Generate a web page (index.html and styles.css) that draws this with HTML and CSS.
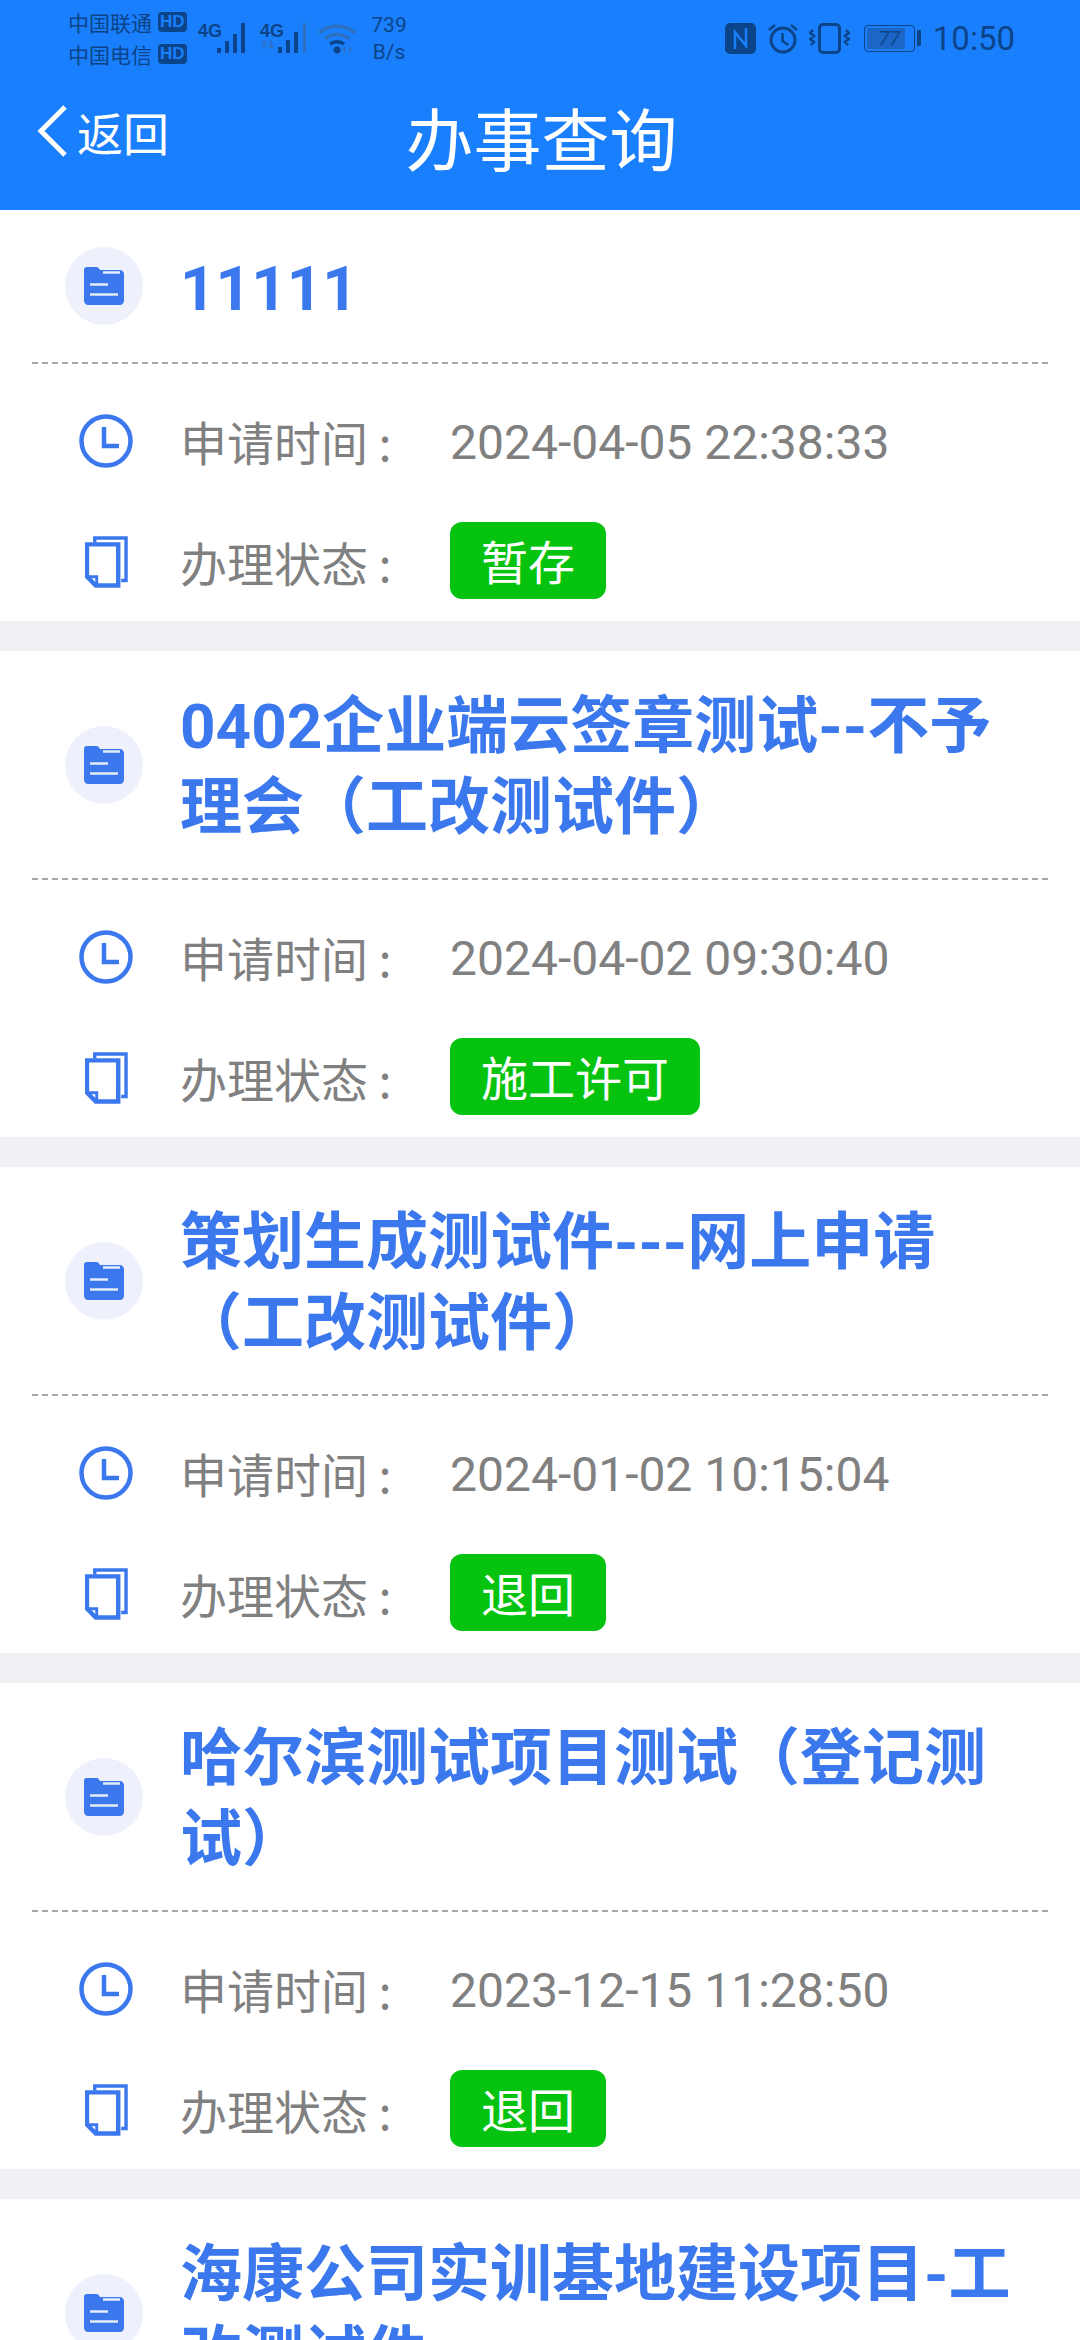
FILE: index.html
```html
<!DOCTYPE html>
<html lang="zh-CN">
<head>
  <meta charset="UTF-8" />
  <title>办事查询</title>
  <link rel="stylesheet" href="styles.css">
</head>
<body>

<svg class="defs" width="0" height="0">
  <symbol id="i-folder" viewBox="0 0 40 38">
    <path d="M3 0h9c2 0 3 1 4 3h20c2 0 4 2 4 4v27c0 2-2 4-4 4H4c-2 0-4-2-4-4V3c0-2 1-3 3-3z" fill="#3b78ee"/>
    <path d="M19 5.500h17M6 17.500h18M6 27.500h28" stroke="#e4ecfc" stroke-width="2.500" fill="none"/>
  </symbol>
  <symbol id="i-clock" viewBox="0 0 54 54">
    <circle cx="27" cy="27" r="24.500" fill="none" stroke="#3b78ee" stroke-width="4.500"/>
    <path d="M25 13v19h15" fill="none" stroke="#3b78ee" stroke-width="4.500"/>
  </symbol>
  <symbol id="i-docs" viewBox="0 0 44 52">
    <path d="M10 6V1.500h32V45h-5" fill="none" stroke="#3b78ee" stroke-width="3.500"/>
    <path d="M2 8h32v42H11l-9-9z" fill="none" stroke="#3b78ee" stroke-width="4.500"/>
    <path d="M3 41h9v8" fill="none" stroke="#3b78ee" stroke-width="3"/>
  </symbol>
</svg>

<div id="header">
  <div class="statusbar">
    <div class="status-left">
      <div class="carriers">
        <div class="carrier">中国联通<span class="hd">HD</span></div>
        <div class="carrier">中国电信<span class="hd">HD</span></div>
      </div>
      <div class="signal">
        <span class="net">4G</span>
        <svg width="32" height="32" viewBox="0 0 32 32"><g fill="#0b4488"><rect x="1" y="26" width="4" height="5"/><rect x="9" y="19" width="4" height="12"/><rect x="17" y="12" width="4" height="19"/><rect x="25" y="1" width="4" height="30"/></g></svg>
      </div>
      <div class="signal">
        <div class="net-col">
          <span class="net">4G</span>
          <svg width="16" height="9" viewBox="0 0 16 9"><path d="M4 9V1M1 4l3-3 3 3M11 0v8M8 5l3 3 3-3" fill="none" stroke="#2e6fc0" stroke-width="1.500"/></svg>
        </div>
        <svg width="32" height="32" viewBox="0 0 32 32"><g fill="#0b4488"><rect x="0" y="25" width="4" height="6"/><rect x="8" y="18" width="4" height="13"/><rect x="16" y="10" width="4" height="21"/></g><rect x="25" y="1" width="3" height="30" fill="#2e6fc0"/></svg>
      </div>
      <svg class="wifi" width="38" height="32" viewBox="0 0 38 32"><path d="M1 11c10-9 26-9 36 0M7 17c7-6 17-6 24 0" fill="none" stroke="#2e6fc0" stroke-width="3.500"/><path d="M12 22c4-3 10-3 14 0" fill="none" stroke="#0b4488" stroke-width="3.500"/><circle cx="19" cy="28" r="3.500" fill="#0b4488"/><path d="M27 24v7l-3-3.500zM31 24v7l3-3.500z" fill="#2e6fc0"/></svg>
      <div class="speed"><span>739</span><span>B/s</span></div>
    </div>
    <div class="status-right">
      <svg class="st-nfc" width="31" height="31" viewBox="0 0 31 31"><rect width="31" height="31" rx="5" fill="#0b4488"/><path d="M10 26V9l11 14V5" fill="none" stroke="#1a7ffd" stroke-width="2.500"/></svg>
      <svg class="st-alarm" width="30" height="31" viewBox="0 0 30 31"><circle cx="15" cy="17" r="12" fill="none" stroke="#0b4488" stroke-width="3"/><path d="M14.500 10v8l6 4M1 7l6-5M29 7l-6-5" fill="none" stroke="#0b4488" stroke-width="2.500"/></svg>
      <svg class="st-vibrate" width="41" height="31" viewBox="0 0 41 31"><rect x="10.500" y="1.500" width="20" height="28" rx="3.500" fill="none" stroke="#0b4488" stroke-width="3"/><path d="M4 7l-3 3 4 3-4 3 4 3-3 3M37 7l3 3-4 3 4 3-4 3 3 3" fill="none" stroke="#0b4488" stroke-width="2.500"/></svg>
      <div class="battery">
        <div class="battery-shell"><div class="battery-fill" style="width:77%"></div><span>77</span></div>
        <div class="battery-nub"></div>
      </div>
      <div class="clock">10:50</div>
    </div>
  </div>
  <div class="nav">
    <div class="back">
      <svg width="34" height="54" viewBox="0 0 34 54"><path d="M30 3L6 27l24 24" fill="none" stroke="#fff" stroke-width="5"/></svg>
      <span>返回</span>
    </div>
    <div class="nav-title">办事查询</div>
  </div>
</div>

<div id="list">
  <div class="card">
    <div class="card-head">
      <div class="badge-icon"><svg width="40" height="38"><use href="#i-folder"/></svg></div>
      <div class="card-title">11111</div>
    </div>
    <div class="card-body">
      <div class="row">
        <div class="row-icon"><svg width="54" height="54"><use href="#i-clock"/></svg></div>
        <div class="row-label">申请时间 :</div>
        <div class="row-value">2024-04-05 22:38:33</div>
      </div>
      <div class="row">
        <div class="row-icon"><svg width="43" height="52"><use href="#i-docs"/></svg></div>
        <div class="row-label">办理状态 :</div>
        <div class="state">暂存</div>
      </div>
    </div>
  </div>

  <div class="card">
    <div class="card-head">
      <div class="badge-icon"><svg width="40" height="38"><use href="#i-folder"/></svg></div>
      <div class="card-title">0402企业端云签章测试--不予理会（工改测试件）</div>
    </div>
    <div class="card-body">
      <div class="row">
        <div class="row-icon"><svg width="54" height="54"><use href="#i-clock"/></svg></div>
        <div class="row-label">申请时间 :</div>
        <div class="row-value">2024-04-02 09:30:40</div>
      </div>
      <div class="row">
        <div class="row-icon"><svg width="43" height="52"><use href="#i-docs"/></svg></div>
        <div class="row-label">办理状态 :</div>
        <div class="state">施工许可</div>
      </div>
    </div>
  </div>

  <div class="card">
    <div class="card-head">
      <div class="badge-icon"><svg width="40" height="38"><use href="#i-folder"/></svg></div>
      <div class="card-title">策划生成测试件---网上申请（工改测试件）</div>
    </div>
    <div class="card-body">
      <div class="row">
        <div class="row-icon"><svg width="54" height="54"><use href="#i-clock"/></svg></div>
        <div class="row-label">申请时间 :</div>
        <div class="row-value">2024-01-02 10:15:04</div>
      </div>
      <div class="row">
        <div class="row-icon"><svg width="43" height="52"><use href="#i-docs"/></svg></div>
        <div class="row-label">办理状态 :</div>
        <div class="state">退回</div>
      </div>
    </div>
  </div>

  <div class="card">
    <div class="card-head">
      <div class="badge-icon"><svg width="40" height="38"><use href="#i-folder"/></svg></div>
      <div class="card-title">哈尔滨测试项目测试（登记测试）</div>
    </div>
    <div class="card-body">
      <div class="row">
        <div class="row-icon"><svg width="54" height="54"><use href="#i-clock"/></svg></div>
        <div class="row-label">申请时间 :</div>
        <div class="row-value">2023-12-15 11:28:50</div>
      </div>
      <div class="row">
        <div class="row-icon"><svg width="43" height="52"><use href="#i-docs"/></svg></div>
        <div class="row-label">办理状态 :</div>
        <div class="state">退回</div>
      </div>
    </div>
  </div>

  <div class="card">
    <div class="card-head">
      <div class="badge-icon"><svg width="40" height="38"><use href="#i-folder"/></svg></div>
      <div class="card-title">海康公司实训基地建设项目-工改测试件</div>
    </div>
  </div>
</div>

</body>
</html>
```

FILE: styles.css
```css
body {
  margin: 0;
  height: 2340px;
  overflow: hidden;
  background-color: #f0f1f5;
  font-family: "Noto Sans CJK SC", "Noto Sans", sans-serif;
}

.defs {
  display: block;
  height: 0;
}

#header {
  background-color: #1a7ffd;
  height: 210px;
  display: flex;
  flex-direction: column;
}

.statusbar {
  height: 76px;
  padding: 0 65px 0 68px;
  display: flex;
  justify-content: space-between;
  align-items: center;
  color: #0b4488;
}

.status-left, .status-right {
  display: flex;
  align-items: center;
}

.carriers {
  width: 130px;
  display: flex;
  flex-direction: column;
  gap: 3px;
}

.carrier {
  display: flex;
  align-items: center;
  font-size: 21px;
  line-height: 29px;
}

.hd {
  margin-left: 6px;
  padding: 0 2px;
  height: 20px;
  line-height: 20px;
  border-radius: 4px;
  background-color: #0b4488;
  color: #1a7ffd;
  font-family: "Liberation Sans", sans-serif;
  font-size: 17px;
  font-weight: bold;
}

.signal {
  display: flex;
  align-items: flex-start;
  width: 62px;
}

.net-col {
  display: flex;
  flex-direction: column;
  align-items: flex-start;
}

.net {
  display: block;
  width: 18px;
  font-family: "Liberation Sans Narrow", "Liberation Sans", sans-serif;
  font-size: 18px;
  font-weight: bold;
  line-height: 18px;
  white-space: nowrap;
}

.wifi {
  margin-left: -4px;
  margin-right: 14px;
}

.speed {
  width: 38px;
  display: flex;
  flex-direction: column;
  align-items: center;
  margin-top: 2px;
  font-family: Roboto, sans-serif;
  font-size: 21px;
  line-height: 27px;
}

.st-alarm {
  margin-left: 12px;
}

.st-vibrate {
  margin-left: 11px;
}

.battery {
  display: flex;
  align-items: center;
  gap: 2px;
  margin-left: 14px;
}

.battery-shell {
  position: relative;
  box-sizing: border-box;
  width: 51px;
  height: 27px;
  border: 1px solid #0b4488;
  border-radius: 4px;
  text-align: center;
  font-family: Roboto, sans-serif;
  font-style: italic;
  font-size: 20px;
  line-height: 25px;
}

.battery-fill {
  position: absolute;
  top: 2px;
  left: 2px;
  bottom: 2px;
  background-color: #1b66c6;
}

.battery-shell span {
  position: relative;
}

.battery-nub {
  width: 4px;
  height: 16px;
  border-radius: 1px;
  background-color: #0b4488;
}

.clock {
  font-family: Roboto, sans-serif;
  font-size: 33px;
  margin-left: 12px;
}

.nav {
  flex-grow: 1;
  display: grid;
  grid-template-columns: 1fr auto 1fr;
  align-items: center;
  padding-bottom: 12px;
  color: white;
}

.back {
  display: flex;
  align-items: center;
  padding-left: 35px;
  margin-bottom: 12px;
  gap: 8px;
  font-size: 46px;
}

.nav-title {
  margin-left: 3px;
  font-size: 68px;
  line-height: 80px;
}

.card {
  background-color: #fff;
  margin-bottom: 30px;
}

.card-head {
  min-height: 154px;
  box-sizing: border-box;
  margin: 0 32px;
  padding: 35px 18px 30px 33px;
  display: flex;
  align-items: center;
  gap: 37px;
  border-bottom: 2px dashed #a6a6a6;
}

.badge-icon {
  flex: none;
  width: 78px;
  height: 78px;
  margin-top: -5px;
  border-radius: 50%;
  background-color: #eef1fb;
  display: flex;
  align-items: center;
  justify-content: center;
}

.card-title {
  font-family: Roboto, "Noto Sans CJK SC", sans-serif;
  font-size: 62px;
  line-height: 81px;
  font-weight: bold;
  color: #3b78ee;
}

.card-body {
  padding: 38px 0 20px 67px;
  display: flex;
  flex-direction: column;
  gap: 43px;
}

.row {
  height: 78px;
  display: flex;
  align-items: center;
  font-size: 47px;
  color: #808080;
}

.row-icon {
  flex: none;
  width: 78px;
  margin-right: 35px;
  display: flex;
  justify-content: center;
}

.row-label {
  width: 270px;
  margin-top: -2px;
}

.row-value {
  margin-top: 2px;
  font-family: Roboto, sans-serif;
  font-size: 48px;
}

.state {
  height: 77px;
  line-height: 76px;
  margin-top: -4px;
  padding: 0 31px;
  border-radius: 12px;
  background-color: #06c30f;
  color: #fff;
}
```
